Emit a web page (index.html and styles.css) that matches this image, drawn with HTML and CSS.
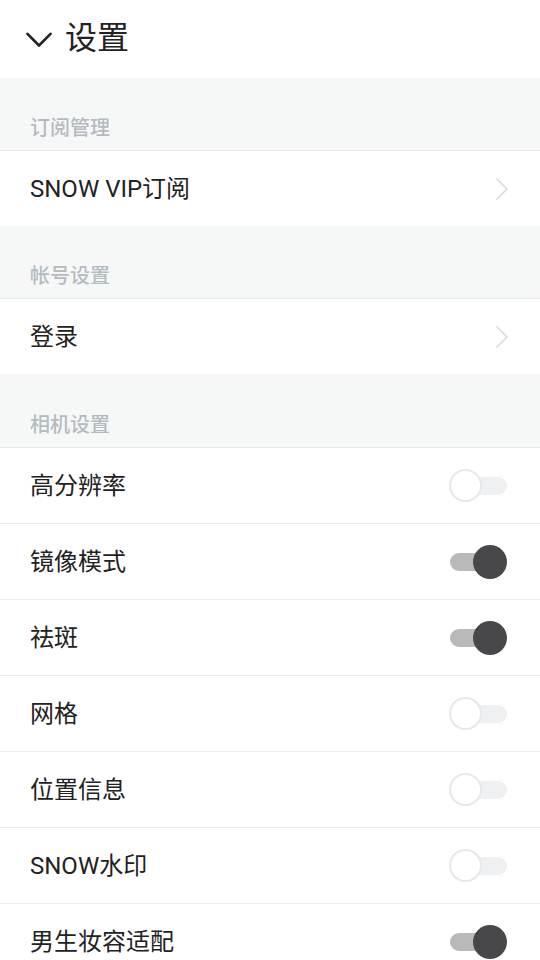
FILE: index.html
```html
<!DOCTYPE html>
<html lang="zh-CN">
<head>
<meta charset="utf-8">
<link rel="stylesheet" href="styles.css">
</head>
<body>
<div class="page">
  <header class="topbar">
    <svg class="down" width="26" height="16" viewBox="0 0 26 16"><path d="M1.5 1.8 L13 13.5 L24.5 1.8" fill="none" stroke="#222" stroke-width="2.6" stroke-linecap="round" stroke-linejoin="round"/></svg>
    <h1 class="title">设置</h1>
  </header>

  <div class="section">订阅管理</div>
  <div class="row last">
    <span class="label">SNOW VIP订阅</span>
    <svg class="arrow" width="14" height="24" viewBox="0 0 14 24"><path d="M1.5 1.5 L12 12 L1.5 22.5" fill="none" stroke="#d9dbdd" stroke-width="1.6"/></svg>
  </div>

  <div class="section">帐号设置</div>
  <div class="row last">
    <span class="label">登录</span>
    <svg class="arrow" width="14" height="24" viewBox="0 0 14 24"><path d="M1.5 1.5 L12 12 L1.5 22.5" fill="none" stroke="#d9dbdd" stroke-width="1.6"/></svg>
  </div>

  <div class="section tall">相机设置</div>
  <div class="row"><span class="label">高分辨率</span><span class="switch off"><span class="knob"></span></span></div>
  <div class="row"><span class="label">镜像模式</span><span class="switch on"><span class="knob"></span></span></div>
  <div class="row"><span class="label">祛斑</span><span class="switch on"><span class="knob"></span></span></div>
  <div class="row"><span class="label">网格</span><span class="switch off"><span class="knob"></span></span></div>
  <div class="row"><span class="label">位置信息</span><span class="switch off"><span class="knob"></span></span></div>
  <div class="row"><span class="label">SNOW水印</span><span class="switch off"><span class="knob"></span></span></div>
  <div class="row"><span class="label">男生妆容适配</span><span class="switch on"><span class="knob"></span></span></div>
</div>
</body>
</html>
```

FILE: styles.css
```css
html, body {
  margin: 0;
  padding: 0;
  background: #ffffff;
}
body {
  font-family: Roboto, "Noto Sans CJK SC", "Noto Sans", sans-serif;
  color: #222222;
}
.page {
  width: 540px;
  height: 960px;
  overflow: hidden;
}
.topbar {
  height: 78px;
  display: flex;
  align-items: center;
  padding-left: 26px;
  box-sizing: border-box;
}
.down {
  margin-top: 2px;
  margin-right: 13px;
}
.title {
  margin: 0;
  font-size: 32px;
  font-weight: 400;
  line-height: 1;
  color: #222;
  padding-bottom: 3px;
}
.section {
  box-sizing: border-box;
  background: #f6f8f8;
  border-bottom: 1px solid #e9ebeb;
  height: 73px;
  padding: 36px 0 0 30px;
  font-size: 20px;
  line-height: 28px;
  color: #b4bbc0;
  font-weight: 500;
}
.section.tall {
  height: 74px;
  padding-top: 37px;
}
.row {
  height: 76px;
  box-sizing: border-box;
  border-bottom: 1px solid #ececec;
  display: flex;
  align-items: center;
  justify-content: space-between;
  padding: 0 31px 0 30px;
}
.row.last {
  height: 75px;
  border-bottom: none;
}
.label {
  font-size: 24px;
  line-height: 32px;
  color: #222;
}
.switch {
  position: relative;
  width: 57px;
  height: 18px;
  border-radius: 9px;
  margin-right: 2px;
}
.switch.off {
  background: #eef0f2;
}
.switch.on {
  background: #b9b9b9;
  width: 40px;
  margin-right: 19px;
}
.knob {
  position: absolute;
  border-radius: 50%;
  box-sizing: border-box;
}
.switch.off .knob {
  width: 33px;
  height: 33px;
  left: -1px;
  top: -7.5px;
  background: #ffffff;
  border: 2px solid #e6e8e9;
}
.switch.on .knob {
  width: 34px;
  height: 34px;
  left: 23px;
  top: -8px;
  background: #48484a;
}
```
